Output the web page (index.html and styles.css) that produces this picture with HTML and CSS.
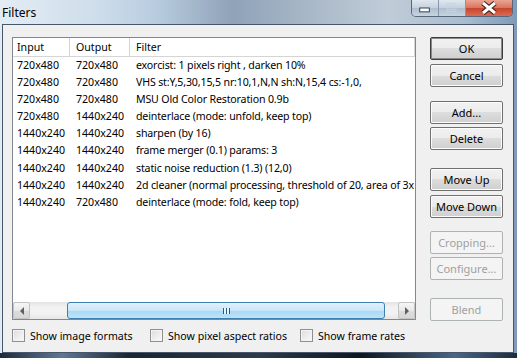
FILE: index.html
```html
<!DOCTYPE html>
<html lang="en">
<head>
<meta charset="UTF-8" />
<title>Filters</title>
<link rel="stylesheet" href="styles.css">
</head>
<body>
<div class="window">
  <div class="titlebar">
    <span class="title">Filters</span>
    <div class="caption-btns">
      <div class="cap cap-min">
        <svg width="27" height="16" viewBox="0 0 27 16"><rect x="8" y="8" width="10" height="4" fill="#fff" stroke="#2d3b4c" stroke-width="1"/></svg>
      </div>
      <div class="cap cap-max">
        <svg width="27" height="16" viewBox="0 0 27 16"><rect x="8.5" y="3.5" width="9" height="8" fill="none" stroke="#c6d2de" stroke-width="1"/><rect x="10.5" y="6.5" width="5" height="3" fill="none" stroke="#c6d2de" stroke-width="1"/></svg>
      </div>
      <div class="cap cap-close">
        <svg width="46" height="16" viewBox="0 0 46 16"><path d="M17 3 L29 13 M29 3 L17 13" stroke="#3a1a14" stroke-width="5"/><path d="M17 3 L29 13 M29 3 L17 13" stroke="#fff" stroke-width="3"/></svg>
      </div>
    </div>
  </div>

  <div class="client">
    <div class="left-col">
      <div class="listview">
        <div class="lv-header">
          <div class="col c-in">Input</div>
          <div class="col c-out">Output</div>
          <div class="col c-filter">Filter</div>
        </div>
        <div class="lv-rows" id="rows"></div>
        <div class="hscroll">
          <div class="sb-btn"><span class="arr arr-left"></span></div>
          <div class="sb-track">
            <div class="sb-thumb"><span class="grip"></span></div>
          </div>
          <div class="sb-btn"><span class="arr arr-right"></span></div>
        </div>
      </div>
      <div class="checks">
        <label class="chk"><span class="box"></span>Show image formats</label>
        <label class="chk"><span class="box"></span>Show pixel aspect ratios</label>
        <label class="chk"><span class="box"></span>Show frame rates</label>
      </div>
    </div>

    <div class="right-col">
      <div class="btn-group g-first">
        <button class="btn btn-default">OK</button>
        <button class="btn">Cancel</button>
      </div>
      <div class="btn-group g-add">
        <button class="btn">Add...</button>
        <button class="btn">Delete</button>
      </div>
      <div class="btn-group g-move">
        <button class="btn">Move Up</button>
        <button class="btn">Move Down</button>
      </div>
      <div class="btn-group g-crop">
        <button class="btn" disabled>Cropping...</button>
        <button class="btn" disabled>Configure...</button>
      </div>
      <div class="btn-group g-blend">
        <button class="btn" disabled>Blend</button>
      </div>
    </div>
  </div>
  <div class="bottom-frame"></div>
</div>
<script>
  const filters = [
    ['720x480', '720x480', 'exorcist: 1 pixels right , darken 10%'],
    ['720x480', '720x480', 'VHS st:Y,5,30,15,5 nr:10,1,N,N sh:N,15,4 cs:-1,0,'],
    ['720x480', '720x480', 'MSU Old Color Restoration 0.9b'],
    ['720x480', '1440x240', 'deinterlace (mode: unfold, keep top)'],
    ['1440x240', '1440x240', 'sharpen (by 16)'],
    ['1440x240', '1440x240', 'frame merger (0.1) params: 3'],
    ['1440x240', '1440x240', 'static noise reduction (1.3) (12,0)'],
    ['1440x240', '1440x240', '2d cleaner (normal processing, threshold of 20, area of 3x'],
    ['1440x240', '720x480', 'deinterlace (mode: fold, keep top)']
  ];

  const rowsEl = document.getElementById('rows');
  filters.forEach(f => {
    const row = document.createElement('div');
    row.className = 'lv-row';
    row.innerHTML = `
      <div class="col c-in">${f[0]}</div>
      <div class="col c-out">${f[1]}</div>
      <div class="col c-filter">${f[2]}</div>`;
    rowsEl.appendChild(row);
  });
</script>
</body>
</html>
```

FILE: styles.css
```css
* {
  box-sizing: border-box;
}
body {
  margin: 0;
  width: 517px;
  height: 358px;
  overflow: hidden;
  font-family: 'Noto Sans', 'DejaVu Sans', sans-serif;
  font-size: 10.6px;
  color: #000;
  background: #2b3d55;
}
.window {
  width: 517px;
  height: 358px;
  display: flex;
  flex-direction: column;
  background:
    linear-gradient(90deg, #e3ecf5 0%, #cfdeeb 18%, #b9cde0 30%, #8fa2b8 45%, #a9b8c8 60%, #c0ccd8 75%, #a9bccf 90%, #7f9ab8 100%);
}
.titlebar {
  height: 24px;
  display: flex;
  justify-content: space-between;
  align-items: flex-start;
}
.title {
  padding: 4px 0 0 2px;
  font-size: 12px;
  color: #000;
}
.caption-btns {
  display: flex;
  margin-right: 4px;
  border: 1px solid #56677b;
  border-top: none;
  border-radius: 0 0 5px 5px;
  overflow: hidden;
}
.cap {
  height: 16px;
  display: flex;
}
.cap-min, .cap-max {
  width: 27px;
  background: linear-gradient(#dfe7ef, #c4d1de 50%, #aebdcd 50%, #c7d4e1);
  border-right: 1px solid #8797aa;
}
.cap-close {
  width: 46px;
  background: linear-gradient(#eba594, #d7745c 50%, #c8432a 50%, #d86e55);
}

.client {
  height: 329px;
  margin: 0 3px 0 2px;
  border: 1px solid #46576a;
  background: #f0f0f0;
  display: flex;
  padding: 12px 9px 0 9px;
  gap: 14px;
}
.bottom-frame {
  flex: 1;
  background: linear-gradient(90deg, #1d2a3a 0%, #5f7896 12%, #1b2533 25%, #2c3a4b 50%, #10161f 70%, #4a6688 88%, #1d2a3a 100%);
}
.left-col {
  width: 404px;
  display: flex;
  flex-direction: column;
}
.listview {
  height: 283px;
  border: 1px solid #828790;
  background: #fff;
  display: flex;
  flex-direction: column;
  overflow: hidden;
}
.lv-header {
  height: 19px;
  display: flex;
  align-items: center;
  border-bottom: 1px solid #d5d5d5;
  background: #fff;
}
.lv-header .col {
  height: 18px;
  line-height: 18px;
  border-right: 1px solid #d5d5d5;
}
.col {
  flex: none;
  padding-left: 4px;
  white-space: nowrap;
  overflow: hidden;
}
.c-in { width: 57px; }
.c-out { width: 60px; padding-left: 6px; }
.c-filter { width: 285px; padding-left: 6px; }
.lv-row .c-filter {
  letter-spacing: -0.15px;
}
.lv-rows {
  flex: 1;
}
.lv-row {
  height: 17.1px;
  line-height: 17px;
  display: flex;
}

/* scrollbar */
.hscroll {
  height: 17px;
  display: flex;
  background: linear-gradient(#e3e3e3, #f2f2f2 30%, #f2f2f2 70%, #e6e6e6);
}
.sb-btn {
  width: 17px;
  height: 17px;
  border: 1px solid #c3c3c3;
  border-radius: 2px;
  background: linear-gradient(#f6f6f6, #e9e9e9 50%, #dcdcdc 50%, #d7d7d7);
  display: flex;
  align-items: center;
  justify-content: center;
}
.arr {
  width: 0;
  height: 0;
  border-top: 4px solid transparent;
  border-bottom: 4px solid transparent;
}
.arr-left { border-right: 4px solid #606060; }
.arr-right { border-left: 4px solid #606060; }
.sb-track {
  flex: 1;
  padding: 0 13px 0 37px;
}
.sb-thumb {
  height: 17px;
  border: 1px solid #3c7fb1;
  border-radius: 3px;
  background: linear-gradient(#e3f1fb, #c8e6f9 50%, #a9d8f5 50%, #bde3f8);
  display: flex;
  align-items: center;
  justify-content: center;
}
.grip {
  width: 7px;
  height: 6px;
  background: repeating-linear-gradient(90deg, #1b5f8f 0 1px, #e8f5fd 1px 3px);
}

/* checkboxes */
.checks {
  display: flex;
  margin-top: 9px;
  height: 13px;
  align-items: center;
}
.chk {
  display: flex;
  align-items: center;
  white-space: nowrap;
}
.chk:nth-child(1) { width: 138px; }
.chk:nth-child(2) { width: 150px; }
.box {
  width: 13px;
  height: 13px;
  border: 1px solid #8e8f8f;
  background: linear-gradient(135deg, #dcdcdc, #fbfbfb);
  margin-right: 5px;
  box-shadow: inset 0 0 0 1px #f4f4f4;
}

/* buttons */
.right-col {
  width: 73px;
  display: flex;
  flex-direction: column;
}
.btn-group {
  display: flex;
  flex-direction: column;
  gap: 3px;
}
.g-first { gap: 4px; }
.g-add { margin-top: 14px; }
.g-move { margin-top: 18px; gap: 4px; }
.g-crop { margin-top: 13px; }
.g-blend { margin-top: 18px; }
.btn {
  height: 23px;
  width: 73px;
  font-family: inherit;
  font-size: 11px;
  color: #000;
  border: 1px solid #707070;
  border-radius: 2px;
  background: linear-gradient(#f2f2f2, #ebebeb 50%, #dddddd 50%, #cfcfcf);
  box-shadow: inset 0 0 0 1px #fcfcfc;
  padding: 0;
}
.btn-default {
  border-color: #3c3c3c;
  box-shadow: inset 0 0 0 1px #8a8a8a;
}
.btn:disabled {
  color: #a0a0a0;
  border-color: #adb2b5;
  background: #f4f4f4;
  box-shadow: none;
}
```
